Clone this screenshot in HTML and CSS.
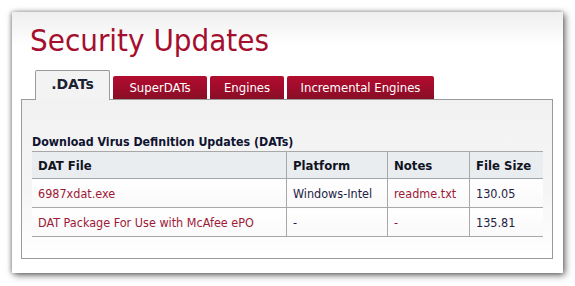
FILE: index.html
```html
<!DOCTYPE html>
<html>
<head>
<meta charset="utf-8">
<link rel="stylesheet" href="styles.css">
</head>
<body>
<div class="card">
  <h1 class="title">Security Updates</h1>
  <div class="tabs">
    <span class="tab active">.DATs</span>
    <span class="tab red t-super">SuperDATs</span>
    <span class="tab red t-eng">Engines</span>
    <span class="tab red t-inc">Incremental Engines</span>
  </div>
  <div class="panel">
    <h2 class="heading">Download Virus Definition Updates (DATs)</h2>
    <table class="dats">
      <thead>
        <tr>
          <th class="c1">DAT File</th>
          <th class="c2">Platform</th>
          <th class="c3">Notes</th>
          <th class="c4">File Size</th>
        </tr>
      </thead>
      <tbody>
        <tr>
          <td><a href="#">6987xdat.exe</a></td>
          <td>Windows-Intel</td>
          <td><a href="#">readme.txt</a></td>
          <td>130.05</td>
        </tr>
        <tr>
          <td><a href="#">DAT Package For Use with McAfee ePO</a></td>
          <td>-</td>
          <td><a href="#">-</a></td>
          <td>135.81</td>
        </tr>
      </tbody>
    </table>
  </div>
</div>
</body>
</html>
```

FILE: styles.css
```css
html, body {
  margin: 0;
  padding: 0;
  background: #ffffff;
}
body {
  padding: 12px;
  font-family: "DejaVu Sans Condensed", "DejaVu Sans", sans-serif;
  color: #1a1a2e;
}
.card {
  width: 551px;
  height: 261px;
  box-sizing: border-box;
  background: linear-gradient(to bottom, #eeeeee 0px, #ffffff 34px, #ffffff 100%);
  box-shadow: 2px 2px 7px rgba(0, 0, 0, 0.6), -1px 0 4px rgba(0, 0, 0, 0.28);
  padding: 9px 10px 0 9px;
}
.title {
  margin: 0 0 0 9px;
  font-family: "DejaVu Sans Condensed", "DejaVu Sans", sans-serif;
  font-weight: normal;
  font-size: 31px;
  line-height: 36px;
  color: #a50f2e;
  height: 48px;
  padding-top: 1px;
}
.tabs {
  display: flex;
  align-items: flex-end;
  gap: 3px;
  padding-left: 14px;
  height: 29px;
  position: relative;
  z-index: 1;
}
.tab {
  box-sizing: border-box;
  display: flex;
  align-items: center;
  justify-content: center;
  font-size: 13px;
}
.tab.active {
  width: 75px;
  height: 30px;
  margin-bottom: -1px;
  border: 1px solid #9a9a9a;
  border-bottom: none;
  border-radius: 2px 2px 0 0;
  background: #f3f3f3;
  font-family: "DejaVu Sans", sans-serif;
  font-weight: bold;
  font-size: 14px;
  color: #1d2233;
  padding-bottom: 3px;
}
.tab.red {
  height: 23px;
  background: linear-gradient(to bottom, #b20d30 0%, #a00c2b 50%, #870f25 100%);
  color: #ffffff;
  border-radius: 2px 2px 0 0;
  padding-bottom: 1px;
}
.t-super { width: 94px; }
.t-eng { width: 74px; }
.t-inc { width: 147px; }
.panel {
  box-sizing: border-box;
  width: 532px;
  height: 160px;
  border: 1px solid #9a9a9a;
  background: linear-gradient(to bottom, #f1f1f1 0%, #f6f6f6 60%, #ffffff 100%);
  padding: 0 10px;
}
.heading {
  margin: 34px 0 0 0;
  font-size: 12.3px;
  line-height: 17px;
  font-weight: bold;
  color: #0f1330;
}
.dats {
  border-collapse: collapse;
  width: 511px;
  font-size: 12.5px;
}
.dats th, .dats td {
  text-align: left;
  padding: 0 0 0 6px;
  border-top: 1px solid #a8a8a8;
  border-bottom: 1px solid #a8a8a8;
  border-left: 1px solid #a8a8a8;
}
.dats th:first-child, .dats td:first-child {
  border-left: none;
}
.dats th {
  height: 26px;
  background: #e9edf0;
  font-weight: bold;
  font-size: 13px;
  color: #11131f;
}
.dats td {
  height: 28px;
  background: linear-gradient(to bottom, #ffffff, #f9f9f9);
  color: #1d2244;
}
.c1 { width: 248px; }
.c2 { width: 94px; }
.c3 { width: 75px; }
.dats a {
  color: #9e1838;
  text-decoration: none;
}
```
